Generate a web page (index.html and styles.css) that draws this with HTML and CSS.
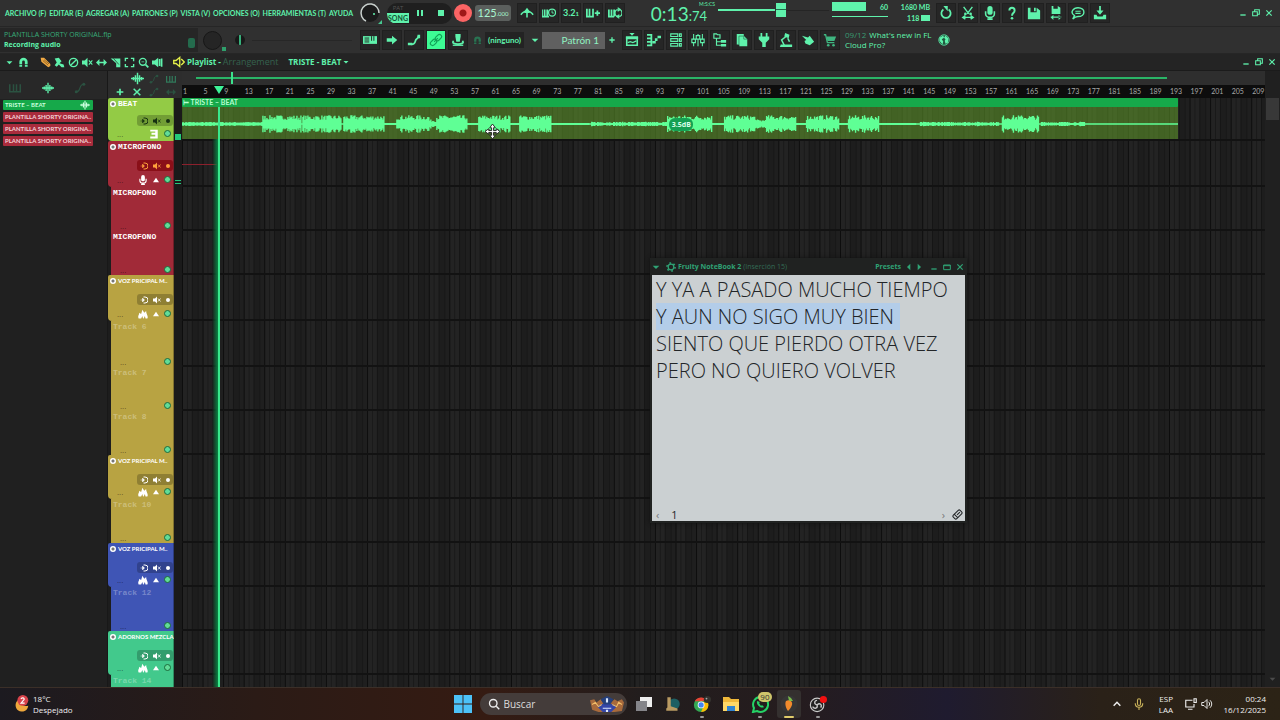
FILE: index.html
```html
<!DOCTYPE html>
<html lang="es">
<head>
  <meta charset="UTF-8">
  <meta name="viewport" content="width=device-width, initial-scale=1">
  <title>Playlist - Arrangement</title>
  <link rel="stylesheet" href="styles.css">
</head>
<body>

<!-- Icon set -->
<svg class="sprite" aria-hidden="true">
  <symbol id="i-metro" viewBox="0 0 16 16"><path d="M1 10c2-3 4-4 7-4s5 1 7 4M8 4v9" stroke="currentColor" stroke-width="1.800" fill="none"/><path d="M5 6l3-4 3 4v2H5z" fill="currentColor"/></symbol>
  <symbol id="i-wait" viewBox="0 0 16 16"><path d="M0 4v8h8M3 4v8M6 4v8" stroke="currentColor" stroke-width="2" fill="none"/><circle cx="11.500" cy="7.500" r="4" stroke="currentColor" stroke-width="1.500" fill="none"/><path d="M11.500 5v3h2" stroke="currentColor" fill="none"/></symbol>
  <symbol id="i-pianoplus" viewBox="0 0 16 16"><path d="M1 3v9h8M4 3v9M8 3v9" stroke="currentColor" stroke-width="2" fill="none"/><path d="M13 5v6M10 8h6" stroke="currentColor" stroke-width="2"/></symbol>
  <symbol id="i-pianoloop" viewBox="0 0 16 16"><path d="M1 4v8h6M4 4v8M7 4v8" stroke="currentColor" stroke-width="2" fill="none"/><path d="M12 4a4 4 0 0 0 0 8M12 4a4 4 0 0 1 0 8M11 2l3 2-3 2M13 10l-3 2 3 2" stroke="currentColor" stroke-width="1.400" fill="none"/></symbol>
  <symbol id="i-undo" viewBox="0 0 16 16"><path d="M5 4a5.300 5.300 0 1 0 6 0" stroke="currentColor" stroke-width="2" fill="none"/><path d="M5 0h5v6z" fill="currentColor"/></symbol>
  <symbol id="i-cut" viewBox="0 0 16 16"><path d="M3 1l6 8M13 1L7 9M2 13h12M5 11l-3 2 3 2M11 11l3 2-3 2" stroke="currentColor" stroke-width="1.600" fill="none"/><circle cx="5" cy="9" r="1.500" fill="currentColor"/><circle cx="11" cy="9" r="1.500" fill="currentColor"/></symbol>
  <symbol id="i-mic" viewBox="0 0 16 16"><rect x="5" y="0" width="6" height="10" rx="3" fill="currentColor"/><path d="M3 6v3a5 4 0 0 0 10 0V6M8 13v3M5 15h6" stroke="currentColor" stroke-width="1.800" fill="none"/></symbol>
  <symbol id="i-help" viewBox="0 0 16 16"><path d="M5 5c0-4 6-4 6 0 0 3-3 3-3 6" stroke="currentColor" stroke-width="2.200" fill="none"/><circle cx="8" cy="14" r="1.500" fill="currentColor"/></symbol>
  <symbol id="i-save" viewBox="0 0 16 16"><path d="M1 2h3v5h7V2l4 3v10H1z" fill="currentColor"/><path d="M8 2h2v4H8z" fill="currentColor"/></symbol>
  <symbol id="i-savenew" viewBox="0 0 16 16"><path d="M3 0h2v3h5V0l3 2v7H3zM2 12h12v1.500H2zM5 10v6l-3-3zM11 10v6l3-3z" fill="currentColor"/></symbol>
  <symbol id="i-chat" viewBox="0 0 16 16"><path d="M2 15l2-4C-2 7 3 2 8 2c9 0 9 10 0 10-2 0-4 1-6 3z" stroke="currentColor" stroke-width="1.600" fill="none"/><path d="M5 6h6M5 8.500h6" stroke="currentColor" stroke-width="1.400"/></symbol>
  <symbol id="i-download" viewBox="0 0 16 16"><path d="M7 0h2v5h3l-4 5-4-5h3zM1 10h3l1 2h6l1-2h3v5H1z" fill="currentColor"/></symbol>
  <symbol id="i-typing" viewBox="0 0 18 16"><path d="M0 3h18v10H0z" fill="currentColor"/><path d="M2 5.500h6M2 8h6M2 10.500h6M11 3v6M14 3v6" stroke="#222" stroke-width="1.200"/></symbol>
  <symbol id="i-arrow" viewBox="0 0 16 16"><path d="M2 6h6V3l6 5-6 5v-3H2z" fill="currentColor"/></symbol>
  <symbol id="i-slide" viewBox="0 0 16 16"><path d="M1 11h5v3H1zM12 2h3v4h-3z" fill="currentColor"/><path d="M5 13c5 0 4-3 5-5s3-1 3-5" stroke="currentColor" stroke-width="2" fill="none"/></symbol>
  <symbol id="i-link" viewBox="0 0 16 16"><g transform="rotate(-45 8 8)" fill="none" stroke="currentColor" stroke-width="1.300"><rect x="0" y="5.500" width="8" height="5" rx="2.500"/><rect x="8" y="5.500" width="8" height="5" rx="2.500"/><path d="M5 8h6"/></g></symbol>
  <symbol id="i-touch" viewBox="0 0 16 16"><path d="M5 1h6v3l-1 6H6L5 4z" fill="currentColor"/><path d="M3 9c-5 5 15 5 10 0" stroke="currentColor" stroke-width="2" fill="none"/><path d="M2 14h12" stroke="currentColor" stroke-width="1.500"/></symbol>
  <symbol id="i-magnet" viewBox="0 0 16 16"><path d="M4 14V7a4 4 0 0 1 8 0v7" stroke="currentColor" stroke-width="4" fill="none"/><path d="M1 11h6M9 11h6" stroke="#222"/></symbol>
  <symbol id="i-playlist" viewBox="0 0 16 16"><path d="M2 5h12v9H2z" stroke="currentColor" stroke-width="1.800" fill="none"/><path d="M1 4h14v3H1zM5 0h6L8 3z" fill="currentColor"/><path d="M3 11l3-1 3 1 4-2" stroke="currentColor" stroke-width="1.500" fill="none"/></symbol>
  <symbol id="i-roll" viewBox="0 0 16 16"><path d="M0 2h5v12H0M0 6h4M0 10h4" stroke="currentColor" stroke-width="2" fill="none"/><path d="M6 9h4v3H6zM9 6h3v3H9zM12 3h4v3h-4z" fill="currentColor"/></symbol>
  <symbol id="i-rack" viewBox="0 0 16 16"><path d="M2 1h8v3H2zM2 6.500h8v3H2zM2 12h8v3H2zM12 1h2v3h-2zM12 6.500h2v3h-2zM12 12h2v3h-2z" stroke="currentColor" stroke-width="1.300" fill="none"/></symbol>
  <symbol id="i-mixer" viewBox="0 0 16 16"><path d="M3 1v14M8 1v14M13 1v14" stroke="currentColor" stroke-width="1.200"/><path d="M1 7h4v4H1zM6 3h4v4H6zM11 7h4v4h-4z" fill="#222" stroke="currentColor" stroke-width="1.300"/></symbol>
  <symbol id="i-tree" viewBox="0 0 16 16"><path d="M1 1h3l1 1h3v4H1zM4 6v8h5M4 10h5" stroke="currentColor" stroke-width="1.300" fill="none"/><path d="M9 8h6v3H9zM9 12.500h6v3H9z" fill="currentColor"/></symbol>
  <symbol id="i-files" viewBox="0 0 16 16"><path d="M2 1h8v2l4 4v8H5v-2H2z" fill="currentColor"/><path d="M4.500 13V3.500H10V7h4" stroke="#2b7a56" stroke-width=".8" fill="none"/></symbol>
  <symbol id="i-plug" viewBox="0 0 16 16"><path d="M4 0h2v4h4V0h2v4h2v3l-4 4v5H6v-5L2 7V4h2z" fill="currentColor"/></symbol>
  <symbol id="i-lamp" viewBox="0 0 16 16"><path d="M7 0l5 2-1 4-5-2zM2 13h13v3H1z" fill="currentColor"/><path d="M8 4L3 8l3 6M10 6l2 4" stroke="currentColor" stroke-width="1.800" fill="none"/></symbol>
  <symbol id="i-hand" viewBox="0 0 16 16"><path d="M1 3l7 2 2-2 2 3 3 4-5 4-5-2-1-3 2-1z" fill="currentColor"/></symbol>
  <symbol id="i-cart" viewBox="0 0 16 16"><path d="M1 2h2l2 9h8" stroke="currentColor" stroke-width="1.500" fill="none"/><path d="M4 4h11l-2 5H5z" fill="currentColor"/><circle cx="6" cy="14" r="1.500" fill="currentColor"/><circle cx="12" cy="14" r="1.500" fill="currentColor"/></symbol>
  <symbol id="i-globe" viewBox="0 0 16 16"><circle cx="8" cy="8" r="7" fill="#23563f" stroke="currentColor"/><path d="M2 5l5-3 1 3-3 2 2 3-1 4-4-5zM10 2l4 4-1 6-3 1-1-4 1-2-2-2z" fill="currentColor"/></symbol>
  <symbol id="i-min" viewBox="0 0 12 12"><path d="M2 9h8" stroke="currentColor" stroke-width="2"/></symbol>
  <symbol id="i-restore" viewBox="0 0 12 12"><path d="M1 4h7v6H1zM4 4V1h7v7H8" stroke="currentColor" stroke-width="1.600" fill="none"/></symbol>
  <symbol id="i-max" viewBox="0 0 12 12"><path d="M1 3h10v7H1zM1 4h10" stroke="currentColor" stroke-width="1.500" fill="none"/></symbol>
  <symbol id="i-close" viewBox="0 0 12 12"><path d="M2 2l8 8M10 2l-8 8" stroke="currentColor" stroke-width="1.800"/></symbol>
  <symbol id="i-down" viewBox="0 0 12 12"><path d="M1 4h10L6 9z" fill="currentColor"/></symbol>
  <symbol id="i-pencil" viewBox="0 0 16 16"><path d="M1 1h5l9 9v3l-3 2-10-8z" fill="currentColor"/><path d="M4 5l8 7M6 4l7 6" stroke="#6b4510"/></symbol>
  <symbol id="i-brush" viewBox="0 0 16 16"><path d="M1 2l6-1 4 5-3 3 6 2 1 4h-4l-4-4-3 3-3-2 3-4z" fill="currentColor"/></symbol>
  <symbol id="i-no" viewBox="0 0 16 16"><path d="M12.500 3.500l-9 9" stroke="currentColor" stroke-width="2"/><circle cx="8" cy="8" r="6" stroke="currentColor" stroke-width="2" fill="none"/></symbol>
  <symbol id="i-mute" viewBox="0 0 16 16"><path d="M0 5h4l4-4v14l-4-4H0z" fill="currentColor"/><path d="M10 5l5 6M15 5l-5 6" stroke="currentColor" stroke-width="1.600"/></symbol>
  <symbol id="i-slip" viewBox="0 0 16 16"><path d="M0 8l5-5v4h6V3l5 5-5 5V9H5v4z" fill="currentColor"/></symbol>
  <symbol id="i-slice" viewBox="0 0 16 16"><path d="M1 2h14v13H9V9z" fill="currentColor"/><path d="M5 2l8 9" stroke="#222"/></symbol>
  <symbol id="i-select" viewBox="0 0 16 16"><path d="M2 6V2h4M10 2h4v4M14 10v4h-4M6 14H2v-4" stroke="currentColor" stroke-width="2" fill="none"/></symbol>
  <symbol id="i-zoom" viewBox="0 0 16 16"><circle cx="7" cy="7" r="5" stroke="currentColor" stroke-width="2" fill="none"/><path d="M11 11l4 4" stroke="currentColor" stroke-width="2.500"/><path d="M5 7h4" stroke="currentColor"/></symbol>
  <symbol id="i-speaker" viewBox="0 0 16 16"><path d="M0 5h4l5-4v14l-5-4H0z" fill="currentColor"/><path d="M11 3v10M14 2v12" stroke="currentColor" stroke-width="2.400"/></symbol>
  <symbol id="i-horn" viewBox="0 0 16 16"><path d="M1 6h3l5-4v12l-5-4H1z" fill="none" stroke="currentColor" stroke-width="1.800"/><path d="M11 4l4 4-4 4" fill="none" stroke="currentColor" stroke-width="1.800"/></symbol>
  <symbol id="i-wave" viewBox="0 0 16 16"><path d="M0 8h16M3 6v4M5.500 4v8M8 1v14M10.500 4v8M13 6v4" stroke="currentColor" stroke-width="1.800"/></symbol>
  <symbol id="i-auto" viewBox="0 0 16 16"><path d="M3 13c7 0 3-10 10-10" stroke="currentColor" stroke-width="1.600" fill="none"/><circle cx="3" cy="13" r="2" fill="currentColor"/><circle cx="13" cy="3" r="2" fill="currentColor"/></symbol>
  <symbol id="i-keys" viewBox="0 0 16 16"><path d="M1 3v10h14V3M6 3v9M10 3v9" stroke="currentColor" stroke-width="2" fill="none"/></symbol>
  <symbol id="i-plus" viewBox="0 0 12 12"><path d="M6 2v8M2 6h8" stroke="currentColor" stroke-width="2"/></symbol>
  <symbol id="i-in" viewBox="0 0 16 16"><path d="M7 2h3a6 6 0 0 1 0 12H7" stroke="currentColor" stroke-width="2" fill="none"/><path d="M1 8h7M5 4l4 4-4 4z" stroke="currentColor" fill="currentColor"/></symbol>
  <symbol id="i-flame" viewBox="0 0 16 16"><path d="M1 15c-2-4 1-5 1-9l3 2 2-7 3 5 3-3c0 5 4 8 2 12h-3l-1-4-2 4H8l-1-4-2 4z" fill="currentColor"/></symbol>
  <symbol id="i-e" viewBox="0 0 16 16"><path d="M2 1h12v14H2v-3h8V9H4V6h6V4H2z" fill="currentColor"/></symbol>
  <symbol id="i-gear" viewBox="0 0 16 16"><circle cx="8" cy="8" r="4.500" fill="none" stroke="currentColor" stroke-width="2"/><circle cx="8" cy="8" r="6.500" fill="none" stroke="currentColor" stroke-width="2.500" stroke-dasharray="2.800 4"/></symbol>
  <symbol id="i-eraser" viewBox="0 0 16 16"><g transform="rotate(-45 8 8)" fill="none" stroke="currentColor" stroke-width="1.500"><rect x="1" y="4.500" width="14" height="7" rx="2"/><path d="M5 4v8M7 8h6"/></g></symbol>
</svg>

<header class="app-bar">
  <div class="bar-row">
    <nav class="menu">
      <a href="#">ARCHIVO (F)</a><a href="#">EDITAR (E)</a><a href="#">AGREGAR (A)</a><a href="#">PATRONES (P)</a><a href="#">VISTA (V)</a><a href="#">OPCIONES (O)</a><a href="#">HERRAMIENTAS (T)</a><a href="#">AYUDA</a>
    </nav>
    <div class="volume">
      <svg viewBox="0 0 24 24" aria-hidden="true"><circle cx="11" cy="12" r="9" fill="#1b1b1b"/><path d="M7 20A9 9 0 1 1 20 12" fill="none" stroke="#c8cfcc" stroke-width="1.500"/><circle cx="15" cy="13" r="1" fill="#62f5ae"/><path d="M23 19v4h-4z" fill="#46c890"/></svg>
    </div>
    <div class="transport">
      <button class="song-mode"><small>PAT</small><b>SONG</b></button>
      <button class="key" aria-label="Pausa"><svg viewBox="0 0 8 8"><path d="M1 1h2v6H1zM5 1h2v6H5z" fill="currentColor"/></svg></button>
      <button class="key" aria-label="Detener"><svg viewBox="0 0 8 8"><path d="M1 1h6v6H1z" fill="currentColor"/></svg></button>
    </div>
    <button class="record" aria-label="Grabar"></button>
    <button class="tempo">125<small>.000</small></button>
    <div class="tools">
      <button aria-label="Metrónomo"><svg><use href="#i-metro"/></svg></button>
      <button aria-label="Esperar"><svg><use href="#i-wait"/></svg></button>
      <button class="count">3.2<small>1</small></button>
      <button aria-label="Overdub"><svg><use href="#i-pianoplus"/></svg></button>
      <button aria-label="Loop"><svg><use href="#i-pianoloop"/></svg></button>
    </div>
    <div class="clock"><span>0:13<small>:74</small></span><sup>M:S:CS</sup></div>
    <div class="seek"><i class="seek-line"></i><i class="seek-thumb"></i><i class="seek-rest"></i></div>
    <div class="meters">
      <div class="cpu"><i class="cpu-load"></i><i class="cpu-line"></i></div>
      <span class="voices">60</span>
      <span class="memory">1680 MB<br>118 <i class="chip"></i></span>
    </div>
    <div class="tools">
      <button aria-label="Deshacer"><svg><use href="#i-undo"/></svg></button>
      <button aria-label="Cortar"><svg><use href="#i-cut"/></svg></button>
      <button aria-label="Audio"><svg><use href="#i-mic"/></svg></button>
      <button aria-label="Ayuda"><svg><use href="#i-help"/></svg></button>
      <button aria-label="Guardar"><svg><use href="#i-save"/></svg></button>
      <button aria-label="Guardar nuevo"><svg><use href="#i-savenew"/></svg></button>
      <button aria-label="Mensajes"><svg><use href="#i-chat"/></svg></button>
      <button aria-label="Descargas"><svg><use href="#i-download"/></svg></button>
    </div>
    <div class="win-controls">
      <button aria-label="Minimizar"><svg><use href="#i-min"/></svg></button>
      <button aria-label="Restaurar"><svg><use href="#i-restore"/></svg></button>
      <button aria-label="Cerrar"><svg><use href="#i-close"/></svg></button>
    </div>
  </div>

  <div class="bar-row">
    <div class="hint">
      <p class="hint-file">PLANTILLA SHORTY ORIGINAL.flp</p>
      <p>Recording audio</p>
      <i class="hint-mark"></i>
    </div>
    <div class="pitch">
      <i class="dial"></i><i class="dot"></i><i class="bead"></i><i class="groove"></i>
    </div>
    <div class="tools">
      <button aria-label="Teclado"><svg><use href="#i-typing"/></svg></button>
      <button aria-label="Seguir"><svg><use href="#i-arrow"/></svg></button>
      <button aria-label="Deslizar"><svg><use href="#i-slide"/></svg></button>
      <button class="on" aria-label="Enlazar"><svg><use href="#i-link"/></svg></button>
      <button aria-label="Control"><svg><use href="#i-touch"/></svg></button>
    </div>
    <button class="snap"><svg><use href="#i-magnet"/></svg><span>(ninguno)</span></button>
    <div class="pattern">
      <button aria-label="Lista"><svg><use href="#i-down"/></svg></button>
      <button class="pattern-name">Patrón 1</button>
      <button aria-label="Nuevo patrón"><svg><use href="#i-plus"/></svg></button>
    </div>
    <div class="tools">
      <button aria-label="Playlist"><svg><use href="#i-playlist"/></svg></button>
      <button aria-label="Piano roll"><svg><use href="#i-roll"/></svg></button>
      <button aria-label="Rack"><svg><use href="#i-rack"/></svg></button>
      <button aria-label="Mixer"><svg><use href="#i-mixer"/></svg></button>
      <button aria-label="Explorador"><svg><use href="#i-tree"/></svg></button>
      <button aria-label="Proyecto"><svg><use href="#i-files"/></svg></button>
      <button aria-label="Plugins"><svg><use href="#i-plug"/></svg></button>
      <button aria-label="Tempo"><svg><use href="#i-lamp"/></svg></button>
      <button aria-label="Táctil"><svg><use href="#i-hand"/></svg></button>
      <button class="dim" aria-label="Tienda"><svg><use href="#i-cart"/></svg></button>
    </div>
    <a class="news" href="#"><span><em>09/12</em> What's new in FL<br>Cloud Pro?</span><svg><use href="#i-globe"/></svg></a>
  </div>
</header>

<section class="title-bar">
  <div class="title-tools">
    <button class="caret" aria-label="Menú"><svg><use href="#i-down"/></svg></button>
    <button class="wide" aria-label="Imán"><svg><use href="#i-magnet"/></svg></button>
    <button class="orange" aria-label="Dibujar"><svg><use href="#i-pencil"/></svg></button>
    <button aria-label="Pintar"><svg><use href="#i-brush"/></svg></button>
    <button aria-label="Borrar"><svg><use href="#i-no"/></svg></button>
    <button aria-label="Silenciar"><svg><use href="#i-mute"/></svg></button>
    <button aria-label="Deslizar"><svg><use href="#i-slip"/></svg></button>
    <button aria-label="Dividir"><svg><use href="#i-slice"/></svg></button>
    <button aria-label="Seleccionar"><svg><use href="#i-select"/></svg></button>
    <button aria-label="Zoom"><svg><use href="#i-zoom"/></svg></button>
    <button aria-label="Escuchar"><svg><use href="#i-speaker"/></svg></button>
  </div>
  <h1><svg class="yellow"><use href="#i-horn"/></svg>Playlist - <em>Arrangement</em><span>TRISTE - BEAT</span><svg class="tiny"><use href="#i-down"/></svg></h1>
  <div class="win-controls">
    <button aria-label="Minimizar"><svg><use href="#i-min"/></svg></button>
    <button aria-label="Restaurar"><svg><use href="#i-restore"/></svg></button>
    <button aria-label="Cerrar"><svg><use href="#i-close"/></svg></button>
  </div>
</section>

<main class="playlist">
  <aside class="picker">
    <div class="picker-tabs">
      <svg class="off"><use href="#i-keys"/></svg>
      <svg><use href="#i-wave"/></svg>
      <svg class="off"><use href="#i-auto"/></svg>
    </div>
    <ul class="clips">
      <li class="clip-green">TRISTE – BEAT<svg><use href="#i-wave"/></svg></li>
      <li>PLANTILLA SHORTY ORIGINA..</li>
      <li>PLANTILLA SHORTY ORIGINA..</li>
      <li>PLANTILLA SHORTY ORIGINA..</li>
    </ul>
  </aside>

  <div class="arrange">
    <div class="arrange-head">
      <div class="head-icons">
        <i></i><svg><use href="#i-wave"/></svg><svg class="off"><use href="#i-auto"/></svg><svg class="half"><use href="#i-keys"/></svg>
        <svg><use href="#i-plus"/></svg><svg><use href="#i-close"/></svg><svg class="off"><use href="#i-auto"/></svg><svg class="off"><use href="#i-slip"/></svg>
      </div>
      <div class="head-time">
        <div class="overview"><i></i></div>
        <ol class="ruler" id="ruler"></ol>
        <i class="head-flag"></i>
      </div>
    </div>
    <div class="rows" id="rows">
      <div class="overlay">
        <i class="playhead"></i>
        <span class="gain">3.5dB</span>
        <svg class="cursor" viewBox="0 0 16 16"><path d="M8 0l3 4H9v3h3V5l4 3-4 3V9H9v3h2l-3 4-3-4h2V9H4v2L0 8l4-3v2h3V4H5z" fill="#fff" stroke="#222" stroke-width="1"/></svg>
      </div>
    </div>
  </div>
  <div class="scroll"><i></i><svg><use href="#i-down"/></svg></div>

  <section class="notebook">
    <header>
      <svg><use href="#i-down"/></svg>
      <svg class="gear"><use href="#i-gear"/></svg>
      <h2>Fruity NoteBook 2 <em>(Inserción 15)</em></h2>
      <button class="presets">Presets</button>
      <button aria-label="Anterior"><svg viewBox="0 0 12 12"><path d="M8 1v10L3 6z" fill="currentColor"/></svg></button>
      <button aria-label="Siguiente"><svg viewBox="0 0 12 12"><path d="M4 1v10l5-5z" fill="currentColor"/></svg></button>
      <div class="note-controls">
        <button aria-label="Minimizar"><svg><use href="#i-min"/></svg></button>
        <button aria-label="Maximizar"><svg><use href="#i-max"/></svg></button>
        <button aria-label="Cerrar"><svg><use href="#i-close"/></svg></button>
      </div>
    </header>
    <div class="note">
      <div class="note-text" contenteditable="true" spellcheck="false">
        <p>Y YA A PASADO MUCHO TIEMPO</p>
        <p><mark>Y AUN NO SIGO MUY BIEN</mark></p>
        <p>SIENTO QUE PIERDO OTRA VEZ</p>
        <p>PERO NO QUIERO VOLVER</p>
      </div>
      <footer><button>‹</button><span>1</span><button class="next">›</button><svg><use href="#i-eraser"/></svg></footer>
    </div>
  </section>
</main>

<footer class="taskbar">
  <div class="weather">
    <svg viewBox="0 0 22 22"><path d="M9 6a7 7 0 1 0 10 7A8 8 0 0 1 9 6z" fill="#f0a83c"/><circle cx="13" cy="7" r="6" fill="#d8434b"/><path d="M11 5.500c.5-2 4-1.500 3.500.5L11 10h4" fill="none" stroke="#fff" stroke-width="1.200"/></svg>
    <p>18°C<br>Despejado</p>
  </div>
  <div class="apps">
    <button aria-label="Inicio"><svg viewBox="0 0 16 16"><path d="M0 0h7.600v7.600H0zM8.400 0H16v7.600H8.400zM0 8.400h7.600V16H0zM8.400 8.400H16V16H8.400z" fill="#4cc2f8"/></svg></button>
    <label class="search">
      <svg viewBox="0 0 16 16"><circle cx="7" cy="7" r="5" fill="none" stroke="#eee" stroke-width="1.800"/><path d="M11 11l4 4" stroke="#eee" stroke-width="1.800"/></svg>
      <input type="text" placeholder="Buscar">
      <svg class="promo" viewBox="0 0 32 16"><path d="M0 4l4-1 2 3 4-3 3 4h6l4-4 3 2 4-2 2 3-2 8-7 1H8l-6-2z" fill="#a86a3c"/><path d="M7 10c3-4 15-4 18 0l-5 5h-8z" fill="#3546a8"/><path d="M10 3l6-3 6 3-3 5h-6z" fill="#26407c"/><path d="M2 8l3-2 3 4 3-2M21 8l4 2 2-4 3 2" stroke="#f3bf6a" fill="none"/><path d="M15 2h2v4h-2zM12 11h8v1h-8zM15 13h2v2h-2z" fill="#dbe8ff"/></svg>
    </label>
    <button aria-label="Vista de tareas"><svg viewBox="0 0 18 16"><path d="M5 1h12v10H5z" fill="#eee"/><path d="M1 5h11v10H1z" fill="#85858a"/></svg></button>
    <button aria-label="Juego"><svg viewBox="0 0 16 16"><circle cx="9" cy="8" r="5" fill="#1d5f63"/><path d="M3 2h3v8l6 2v2H2v-2l1-1z" fill="#b99a62"/></svg></button>
    <button class="open" aria-label="Chrome"><svg viewBox="0 0 20 18"><circle cx="9" cy="10" r="8" fill="#34a853"/><path d="M2 6a8 8 0 0 1 14 0H9z" fill="#ea4335"/><path d="M16.500 7A8 8 0 0 1 9 18l3-7-2-4z" fill="#fbbc05"/><circle cx="9" cy="10" r="3.800" fill="#fff"/><circle cx="9" cy="10" r="2.900" fill="#4285f4"/><circle cx="16" cy="4" r="4" fill="#34332f"/><circle cx="15" cy="3" r="1" fill="#aaa"/></svg></button>
    <button aria-label="Archivos"><svg viewBox="0 0 18 16"><path d="M1 1h6l2 2h8v12H1z" fill="#f1b93a"/><path d="M1 6h16v9H1z" fill="#ffd867"/><path d="M5 10h8v5H5z" fill="#2f84d2"/></svg></button>
    <button class="open" aria-label="WhatsApp"><svg viewBox="0 0 18 18"><path d="M2 17l1-4a7.500 7.500 0 1 1 3 3z" fill="none" stroke="#25d366" stroke-width="2"/><path d="M6 6c-1 4 4 8 7 6l-2-2-1 1-2-3 1-1z" fill="#25d366"/></svg><span class="badge">90</span></button>
    <button class="open active" aria-label="FL Studio"><svg viewBox="0 0 18 18"><circle cx="9" cy="9" r="8.500" fill="#363636"/><path d="M6 6c3-2 7 0 6 4-1 3-3 5-4 6-3-4-3-8-2-10z" fill="#f08a2c"/><path d="M9 6l-1-5 3 2 2 3z" fill="#79b94a"/></svg></button>
    <button class="open" aria-label="OBS"><svg viewBox="0 0 20 18"><circle cx="9" cy="10" r="7.500" fill="#222" stroke="#c9c9c9" stroke-width="1.300"/><path d="M9 10c-4-1-3-5 0-5M9 10c3-3 6 0 4 3M9 10c1 4-3 5-5 2" fill="none" stroke="#c9c9c9" stroke-width="1.500"/><circle cx="16" cy="4" r="4" fill="#f21010"/></svg></button>
  </div>
  <div class="tray">
    <svg viewBox="0 0 12 12"><path d="M2 8l4-4 4 4" fill="none" stroke="#eee" stroke-width="1.800"/></svg>
    <svg class="tray-mic" viewBox="0 0 16 16"><rect x="6" y="1" width="4" height="9" rx="2" fill="none" stroke="currentColor" stroke-width="1.500"/><path d="M3 7c0 7 10 7 10 0M8 12v4" fill="none" stroke="currentColor" stroke-width="1.500"/></svg>
    <p class="lang">ESP<br>LAA</p>
    <svg viewBox="0 0 16 16"><path d="M10 3H1v9h11V8M4 15h6M12 1h3v5h-3z" fill="none" stroke="#eee" stroke-width="1.500"/></svg>
    <svg viewBox="0 0 16 16"><path d="M1 6h3l4-4v12l-4-4H1zM10 5c2 2 2 4 0 6M12 3c3 3 3 7 0 10" fill="none" stroke="#eee" stroke-width="1.300"/></svg>
    <p class="date">00:24<br>16/12/2025</p>
  </div>
</footer>

<script src="script.js"></script>
</body>
</html>
```
FILE: styles.css
```css
:root {
  --mint: #5ff2ac;
  --panel: #303030;
  --green: #16a94a;
  --small: Lato, "Open Sans", sans-serif;
  --ui: "Open Sans", "Noto Sans", sans-serif;
}

* {
  margin: 0;
  padding: 0;
  box-sizing: border-box;
}

body {
  height: 100vh;
  display: flex;
  flex-direction: column;
  overflow: hidden;
  background: #1d1d1d;
  color: var(--mint);
  font: 9px/12px var(--ui);
}

button {
  border: 0;
  background: none;
  color: inherit;
  font: inherit;
  display: flex;
  align-items: center;
  justify-content: center;
}

a {
  color: inherit;
  text-decoration: none;
}

em {
  font-style: normal;
}

ul, ol {
  list-style: none;
}

svg {
  width: 12px;
  height: 12px;
  display: block;
  flex: none;
}

.sprite {
  display: none;
}

/* Top bars */
.app-bar {
  background: var(--panel);
  flex: none;
}

.bar-row {
  display: flex;
  align-items: center;
  height: 27px;
  border-bottom: 1px solid #262626;
}

.menu {
  width: 357px;
  padding: 0 4px 0 5px;
  display: flex;
  justify-content: space-between;
  font: bold 7px/16px var(--small);
  white-space: nowrap;
}

.volume {
  width: 30px;
  padding-left: 2px;
}

.volume svg {
  width: 24px;
  height: 24px;
}

.transport {
  width: 65px;
  height: 21px;
  display: flex;
  border-radius: 10px;
  background: #1f1f1f;
  overflow: hidden;
}

.song-mode {
  width: 22px;
  flex-direction: column;
  align-items: stretch;
}

.song-mode small {
  font-size: 6px;
  line-height: 9px;
  color: #545454;
}

.song-mode b {
  background: var(--mint);
  color: #145236;
  font: bold 7px/10px var(--small);
}

.key {
  width: 21px;
}

.key svg {
  width: 8px;
  height: 8px;
}

.record {
  width: 18px;
  height: 18px;
  margin: 0 3px 0 2px;
  border-radius: 50%;
  background: radial-gradient(circle, #a01818 3px, #fb6464 4px);
}

.tempo {
  width: 36px;
  height: 16px;
  border-radius: 3px;
  background: #5b5f5d;
  color: #a8f5d0;
  font: 11px/16px var(--small);
}

.tempo small {
  font-size: 6px;
  line-height: 19px;
}

.tools {
  display: flex;
  gap: 2px;
}

.tempo + .tools {
  margin-left: 6px;
}

.tools button {
  width: 20px;
  height: 20px;
  background: #262626;
  border: 1px solid #202020;
}

.tools svg {
  width: 14px;
  height: 14px;
}

.tools .on {
  background: #3dfc94;
  color: #12a257;
}

.tools .dim {
  color: #3fb580;
}

.count {
  font: bold 9px/16px var(--small);
}

.count small {
  font-size: 6px;
  line-height: 19px;
}

.clock {
  width: 90px;
  height: 24px;
  display: flex;
  justify-content: flex-end;
  position: relative;
  padding-right: 8px;
  font: 19px/26px var(--small);
}

.clock small {
  font-size: 13px;
}

.clock sup {
  position: absolute;
  right: 0;
  top: 1px;
  font-size: 5px;
  line-height: 5px;
}

.seek {
  width: 114px;
  padding: 3px 0 0 3px;
  display: flex;
  align-items: center;
  align-self: flex-start;
}

.seek-line {
  width: 57px;
  height: 2px;
  background: var(--mint);
}

.seek-thumb {
  width: 10px;
  height: 14px;
  margin: 0 1px;
  background: linear-gradient(#5ff2ac 45%, #1e6c48 45% 52%, #5ff2ac 52%);
}

.seek-rest {
  flex: 1;
  height: 1px;
  background: #252525;
}

.meters {
  width: 107px;
  display: flex;
  padding-left: 3px;
  font: bold 7px/11px var(--small);
}

.cpu {
  width: 48px;
}

.cpu-load {
  display: block;
  width: 34px;
  height: 9px;
  background: var(--mint);
}

.cpu-line {
  display: block;
  height: 1px;
  margin-top: 5px;
  width: 56px;
  background: var(--mint);
}

.memory {
  flex: 1;
  text-align: right;
  padding-right: 6px;
  white-space: nowrap;
}

.chip {
  display: inline-block;
  width: 9px;
  height: 6px;
  background: var(--mint);
}

.win-controls {
  margin-left: auto;
  padding-right: 5px;
  display: flex;
}

.title-bar .win-controls {
  padding-right: 2px;
}

.win-controls button {
  width: 13px;
  height: 13px;
}

.win-controls svg {
  width: 8px;
  height: 8px;
}

.hint {
  position: relative;
  width: 198px;
  height: 24px;
  padding: 1px 4px;
  background: #262626;
  font: bold 7px/10px var(--ui);
}

.hint-file {
  color: #38ad79;
  font: 7px/11px var(--ui);
}

.hint-mark {
  position: absolute;
  right: 3px;
  bottom: 4px;
  width: 7px;
  height: 10px;
  background: #246b4d;
  border-radius: 2px;
}

.pitch {
  width: 162px;
  display: flex;
  align-items: center;
}

.dial {
  width: 19px;
  height: 19px;
  margin-left: 5px;
  border-radius: 50%;
  border: 1px solid #171717;
  background: #252525;
}

.dot {
  width: 4px;
  height: 4px;
  margin: 18px 9px 0 0;
  background: #2fa06c;
}

.bead {
  width: 10px;
  height: 10px;
  margin-right: 7px;
  border-radius: 50%;
  background: linear-gradient(90deg, #181818 45%, #37b17b 45% 60%, #181818 60%);
}

.groove {
  flex: 1;
  height: 1px;
  margin-right: 8px;
  background: #272727;
}

.snap {
  width: 58px;
  padding-left: 3px;
  gap: 3px;
  font: bold 8px/12px var(--small);
}

.snap span {
  background: #232323;
  padding: 2px 3px;
}

.snap svg {
  width: 9px;
  height: 9px;
  color: #2a7352;
}

.pattern {
  display: flex;
  margin: 0 3px 0 2px;
  height: 17px;
}

.pattern button {
  width: 14px;
}

.pattern .pattern-name {
  width: 63px;
  padding-right: 6px;
  justify-content: flex-end;
  background: #606060;
  color: #8ff0c0;
  font: 10px/17px var(--small);
}

.pattern svg {
  width: 8px;
  height: 8px;
}

.news {
  display: flex;
  align-items: center;
  width: 105px;
  margin-left: 5px;
  justify-content: space-between;
  font: 8px/10px var(--ui);
  white-space: nowrap;
}

.news em {
  color: #399a70;
  margin-right: 1px;
}

/* Playlist title bar */
.title-bar {
  flex: none;
  height: 17px;
  display: flex;
  align-items: center;
  background: #242424;
  border-bottom: 1px solid #1b1b1b;
}

.title-tools {
  display: flex;
  width: 173px;
  padding-left: 2px;
}

.title-tools button {
  width: 14px;
}

.title-tools .wide {
  margin-right: 8px;
}

.title-tools svg {
  width: 11px;
  height: 11px;
}

.title-tools .caret svg {
  width: 7px;
}

.orange {
  color: #f2ab45;
}

.yellow {
  color: #e4f04a;
}

.title-bar h1 {
  display: flex;
  align-items: center;
  gap: 2px;
  font: bold 8px/14px var(--ui);
}

.title-bar h1 em {
  font: 9px/14px var(--ui);
  color: #35624e;
}

.title-bar h1 span {
  margin-left: 8px;
}

.tiny {
  width: 6px;
  height: 6px;
}

/* Playlist */
.playlist {
  flex: 1;
  min-height: 0;
  display: flex;
  position: relative;
}

.picker {
  width: 108px;
  border-right: 1px solid #181818;
  background: #202020;
}

.picker-tabs {
  height: 28px;
  padding: 11px 21px 0 9px;
  display: flex;
  justify-content: space-between;
  background: #282828;
}

.picker-tabs .off, .head-icons .off {
  color: #2b5241;
}

.half {
  color: #31785a;
}

.clips {
  padding: 1px 14px 0 3px;
  color: #f2d3d8;
  font: bold 6px/10px var(--small);
}

.clips li {
  display: flex;
  justify-content: space-between;
  height: 10px;
  margin-bottom: 2px;
  padding: 0 2px;
  background: #a92b3c;
  border-radius: 1px;
  white-space: nowrap;
}

.clips .clip-green {
  background: var(--green);
  color: #c9ffdd;
}

.clips svg {
  height: 10px;
}

.arrange {
  flex: 1;
  min-width: 0;
  display: flex;
  flex-direction: column;
}

.arrange-head {
  display: flex;
  height: 27px;
  flex: none;
}

.head-icons {
  width: 74px;
  padding: 0 3px 0 4px;
  display: grid;
  grid-template-columns: 1fr 1fr 1fr 1fr;
  place-items: center;
  background: #2d2d2d;
}

.head-icons svg {
  width: 10px;
  height: 10px;
}

.head-icons svg:nth-child(2) {
  width: 13px;
  height: 13px;
}

.head-time {
  flex: 1;
  min-width: 0;
  position: relative;
}

.overview {
  height: 14px;
  padding: 6px 98px 0 14px;
  background: #2e2e2e;
  position: relative;
}

.overview::before {
  content: "";
  display: block;
  height: 2px;
  background: #2ab467;
}

.overview i {
  position: absolute;
  left: 49px;
  top: 1px;
  width: 2px;
  height: 12px;
  background: #3be28c;
}

.ruler {
  display: flex;
  height: 13px;
  overflow: hidden;
  background: #0d0d0d;
  color: #a8a8a8;
  font: 7px/13px var(--small);
}

.ruler li {
  flex: 0 0 1.9%;
  padding-left: 1px;
}

.head-flag {
  position: absolute;
  left: 32px;
  top: 15px;
  border: 5px solid transparent;
  border-top: 8px solid #3df398;
  border-bottom: 0;
}

.rows {
  flex: 1;
  min-height: 0;
  overflow: hidden;
  position: relative;
}

.row {
  display: flex;
  height: 44px;
}

.row:first-child {
  height: 43px;
}

.row.tall {
  height: 46px;
}

.track {
  width: 63px;
  margin-left: 3px;
  display: flex;
  flex-direction: column;
  border-right: 1px solid rgba(0, 0, 0, 0.3);
  color: #fff;
}

.track.parent {
  width: 66px;
  margin-left: 0;
  border-radius: 2px 0 0 4px;
}

.lime { background: #93cb45; }
.red { background: #a12a38; }
.gold { background: #b8a342; }
.blue { background: #3f55b5; }
.teal { background: #42c98c; }

.track h3 {
  display: flex;
  align-items: center;
  gap: 2px;
  padding-left: 2px;
  white-space: nowrap;
  font: bold 6px/11px var(--small);
}

.track.mono h3 {
  font: bold 8px/11px "Liberation Mono", monospace;
}

.track.faint h3 {
  color: rgba(255, 255, 255, 0.3);
}

.num {
  flex: none;
  width: 6px;
  height: 6px;
  border-radius: 50%;
  background: radial-gradient(circle, #777 1px, #fff 2px);
}

.track-keys {
  display: flex;
  width: 36px;
  height: 11px;
  margin: 8px 0 0 auto;
  justify-content: space-around;
  align-items: center;
  border-radius: 3px;
  background: rgba(0, 0, 0, 0.22);
}

.lime .track-keys {
  margin-top: 6px;
  color: #153010;
}

.red .track-keys {
  color: #ffa23c;
  background: #8a0f18;
}

.track-keys svg {
  width: 8px;
  height: 8px;
}

.track-keys i {
  width: 4px;
  height: 4px;
  border-radius: 50%;
  background: currentColor;
}

.track-foot {
  display: flex;
  align-items: center;
  gap: 5px;
  height: 11px;
  margin-top: auto;
  padding: 0 2px 0 9px;
}

.parent .track-foot {
  height: 13px;
  padding-bottom: 2px;
}

.track-foot small {
  margin-right: auto;
  color: rgba(0, 0, 0, 0.5);
  font: 8px/8px var(--ui);
}

.track-foot svg {
  width: 10px;
  height: 10px;
}

.track-foot .up {
  width: 6px;
  height: 6px;
}

.led {
  width: 7px;
  height: 7px;
  border-radius: 50%;
  border: 1px solid #1c6b3c;
  background: #62dc98;
}

.meter {
  width: 8px;
  display: flex;
  flex-direction: column;
  justify-content: flex-end;
  padding: 0 1px 1px 1px;
  background: #1a1a1a;
}

.meter i {
  height: 6px;
  background: #23c97a;
}

.meter.lines i {
  background: repeating-linear-gradient(#23c97a 0 1px, transparent 1px 3px);
}

.lane {
  flex: 1;
  min-width: 0;
  border-bottom: 2px solid #121212;
  background: linear-gradient(90deg, #0d0d0d 1px, #232323 1px 24%, #191919 24% 27%, #232323 27% 49%, #151515 49% 53%, #1d1d1d 53% 75%, #171717 75% 79%, #1f1f1f 79%) 0 0 / 1.9% 100%;
}

.audio-clip {
  width: 92%;
  height: 41px;
  background: rgba(91, 145, 42, 0.6);
}

.audio-clip header {
  height: 9px;
  padding-left: 1px;
  border-radius: 1px;
  background: var(--green);
  color: #b6ffd2;
  font: bold 7px/9px var(--small);
}

.audio-clip svg {
  width: 100%;
  height: 32px;
}

.rec-line {
  width: 35px;
  height: 1px;
  margin-top: 23px;
  background: #8c202c;
}

.overlay {
  position: absolute;
  inset: 0 0 0 74px;
}

.playhead {
  position: absolute;
  left: 30px;
  top: 41px;
  bottom: 0;
  width: 8px;
  background: linear-gradient(90deg, transparent, #0b7a40 70%, #39e88c 75%);
}

.playhead::before {
  content: "";
  position: absolute;
  right: 0;
  bottom: 100%;
  width: 2px;
  height: 32px;
  background: #39e88c;
}

.gain {
  position: absolute;
  left: 45%;
  top: 20px;
  width: 24px;
  border-radius: 6px;
  background: #15a053;
  color: #d9ffe8;
  text-align: center;
  font: bold 7px/13px var(--ui);
}

.cursor {
  position: absolute;
  left: 28%;
  top: 26px;
  width: 15px;
  height: 15px;
}

.scroll {
  width: 15px;
  padding: 27px 1px 2px;
  display: flex;
  flex-direction: column;
  justify-content: space-between;
  align-items: center;
  background: #202020;
}

.scroll i {
  width: 13px;
  height: 22px;
  background: #383838;
}

.scroll svg {
  width: 7px;
  color: #4b4b4b;
}

/* Floating plugin window */
.notebook {
  position: absolute;
  left: 650px;
  top: 187px;
  width: 317px;
  padding: 0 2px 2px;
  background: #202221;
  box-shadow: 0 0 4px #111;
}

.notebook > header {
  display: flex;
  align-items: center;
  height: 17px;
  gap: 2px;
  color: #2fa375;
}

.notebook header svg {
  width: 8px;
  height: 8px;
}

.notebook header .gear {
  width: 10px;
  height: 10px;
  margin-left: 4px;
}

.notebook h2 {
  font: bold 7px/14px var(--ui);
  margin-right: auto;
}

.notebook h2 em {
  font-weight: normal;
  color: #336b55;
}

.presets {
  font: bold 7px/14px var(--ui);
  margin-right: 2px;
}

.note-controls {
  display: flex;
  gap: 5px;
  padding: 0 1px 0 5px;
}

.note {
  background: #cbd0d2;
  color: #222528;
}

.note-text {
  height: 233px;
  padding: 1px 4px;
  outline: none;
  font: 300 20px/27px "Open Sans", sans-serif;
}

.note mark {
  background: #b3cde9;
  color: inherit;
  padding-right: 6px;
}

.note footer {
  display: flex;
  align-items: center;
  height: 13px;
  padding: 0 2px 0 4px;
  gap: 12px;
  font: 11px/12px var(--ui);
}

.note footer button {
  color: #777;
}

.note footer .next {
  margin-left: auto;
}

.note footer svg {
  width: 11px;
  height: 11px;
  margin-left: -5px;
}

/* Taskbar */
.taskbar {
  flex: none;
  height: 33px;
  display: grid;
  grid-template-columns: 1fr auto 1fr;
  align-items: center;
  border-top: 1px solid #3b2f28;
  background: linear-gradient(90deg, #1c1a20 0, #2b1b16 20%, #351b12 38%, #221d1d 50%, #251c1e 62%, #1f1b2f 74%, #2a2118 86%, #2c2316 100%);
  color: #eee;
  font: 8px/11px var(--ui);
}

.weather {
  display: flex;
  align-items: center;
  gap: 2px;
  padding-left: 11px;
}

.weather svg {
  width: 20px;
  height: 20px;
}

.apps {
  display: flex;
  align-items: center;
  gap: 5px;
}

.apps button {
  position: relative;
  width: 24px;
  height: 28px;
}

.apps button svg {
  width: 18px;
  height: 18px;
}

.search {
  display: flex;
  align-items: center;
  width: 147px;
  height: 22px;
  padding: 0 3px 0 8px;
  border-radius: 11px;
  background: #443c3a;
}

.search input {
  flex: 1;
  min-width: 0;
  padding-left: 4px;
  border: 0;
  background: none;
  font: 10px/16px var(--ui);
}

.search input::placeholder {
  color: #ddd;
}

.search .promo {
  width: 34px;
  height: 17px;
}

.open::after {
  content: "";
  position: absolute;
  bottom: 0;
  left: 10px;
  right: 10px;
  height: 2px;
  border-radius: 1px;
  background: #999;
}

.active {
  background: #34302f;
  border-radius: 3px;
}

.active::after {
  left: 7px;
  right: 7px;
  background: #e0cc6a;
}

.badge {
  position: absolute;
  top: 2px;
  right: 0;
  padding: 0 2px;
  border-radius: 5px;
  background: #cfc56b;
  color: #333;
  font-size: 8px;
  line-height: 10px;
}

.tray {
  display: flex;
  justify-content: flex-end;
  align-items: center;
  gap: 4px;
  padding-right: 14px;
}

.tray svg:first-child {
  width: 10px;
  height: 10px;
}

.tray-mic {
  margin: 0 10px 0 7px;
  color: #c9b25a;
}

.lang {
  margin-right: 8px;
}

.date {
  min-width: 49px;
}

.lang, .date {
  text-align: right;
}
```
FILE: script.js
```js
const tracks = [
  { name: 'BEAT', color: 'lime', parent: true, mono: true, icon: 'i-e', clip: true },
  { name: 'MICROFONO', color: 'red', parent: true, mono: true, icon: 'i-mic', tall: true, rec: true },
  { name: 'MICROFONO', color: 'red', mono: true },
  { name: 'MICROFONO', color: 'red', mono: true },
  { name: 'VOZ PRICIPAL M..', color: 'gold', parent: true, icon: 'i-flame', tall: true },
  { name: 'Track 6', color: 'gold', mono: true, faint: true, tall: true },
  { name: 'Track 7', color: 'gold', mono: true, faint: true },
  { name: 'Track 8', color: 'gold', mono: true, faint: true },
  { name: 'VOZ PRICIPAL M..', color: 'gold', parent: true, icon: 'i-flame' },
  { name: 'Track 10', color: 'gold', mono: true, faint: true },
  { name: 'VOZ PRICIPAL M..', color: 'blue', parent: true, icon: 'i-flame' },
  { name: 'Track 12', color: 'blue', mono: true, faint: true },
  { name: 'ADORNOS MEZCLA', color: 'teal', parent: true, icon: 'i-flame' },
  { name: 'Track 14', color: 'teal', mono: true, faint: true }
];

// [start, end, level] along the clip
const levels = [
  [0, 81, 2], [81, 120, 8], [121, 160, 8], [162, 203, 8], [203, 215, 1],
  [215, 248, 8], [248, 255, 4], [255, 286, 8], [286, 297, 1], [297, 329, 8],
  [329, 338, 1], [338, 370, 8], [370, 408, 1], [410, 486, 2], [486, 531, 8],
  [531, 543, 1], [543, 575, 8], [575, 584, 4], [584, 615, 8], [615, 625, 1],
  [625, 658, 8], [658, 667, 1], [667, 698, 8], [698, 735, 1], [739, 818, 2],
  [821, 858, 8], [860, 904, 2]
];

let seed = 7;
function rand() {
  seed = (seed * 16807) % 2147483647;
  return seed / 2147483647;
}

function wavePath() {
  let d = 'M0 17H997';
  levels.forEach(([from, to, level]) => {
    for (let x = from; x < to; x++) {
      const h = Math.max(1, level * (0.5 + rand() * 0.6));
      d += `M${x} ${(17 - h).toFixed(1)}V${(17 + h).toFixed(1)}`;
    }
  });
  return d;
}

function audioClip() {
  return `<div class="audio-clip"><header>⊢ TRISTE – BEAT</header>
    <svg viewBox="0 0 997 32" preserveAspectRatio="none"><path d="${wavePath()}" stroke="#5fff95" stroke-width="1.4" fill="none"/></svg></div>`;
}

function trackHead(t) {
  const cls = ['track', t.color];
  ['parent', 'mono', 'faint'].forEach(k => { if (t[k]) cls.push(k); });
  const keys = t.parent
    ? '<div class="track-keys"><svg><use href="#i-in"/></svg><svg><use href="#i-mute"/></svg><i></i></div>' : '';
  const icons = t.parent
    ? `<svg><use href="#${t.icon}"/></svg>${t.clip ? '' : '<svg class="up" viewBox="0 0 8 8"><path d="M0 7h8L4 1z" fill="currentColor"/></svg>'}` : '';
  return `<div class="${cls.join(' ')}"><h3>${t.parent ? '<i class="num"></i>' : ''}${t.name}</h3>${keys}
    <div class="track-foot"><small>...</small>${icons}<i class="led"></i></div></div>`;
}

const rows = document.getElementById('rows');
const html = tracks.map(t => `<div class="row${t.tall ? ' tall' : ''}">${trackHead(t)}
  <div class="meter${t.rec ? ' lines' : ''}">${t.clip || t.rec ? '<i></i>' : ''}</div>
  <div class="lane">${t.clip ? audioClip() : ''}${t.rec ? '<div class="rec-line"></div>' : ''}</div></div>`).join('');
rows.insertAdjacentHTML('afterbegin', html);

const ruler = document.getElementById('ruler');
for (let bar = 1; bar <= 209; bar += 4) {
  ruler.insertAdjacentHTML('beforeend', `<li>${bar}</li>`);
}
```
